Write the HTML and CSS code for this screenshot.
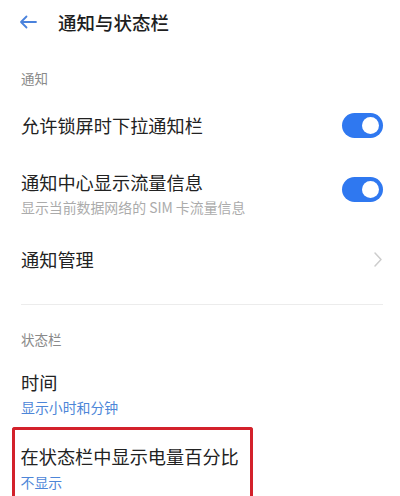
FILE: index.html
```html
<!DOCTYPE html>
<html lang="zh">
<head>
<meta charset="utf-8">
<link rel="stylesheet" href="styles.css">
</head>
<body>
<div class="page">
  <header class="topbar">
    <svg class="back" width="18" height="14" viewBox="0 0 18 14"><path d="M17 7H2M7.5 1.5L2 7l5.5 5.5" fill="none" stroke="#4a82dc" stroke-width="1.8" stroke-linecap="round" stroke-linejoin="round"/></svg>
    <h1 class="title">通知与状态栏</h1>
  </header>

  <div class="section-label first">通知</div>

  <div class="row row-toggle1">
    <div class="texts"><div class="main">允许锁屏时下拉通知栏</div></div>
    <div class="toggle"><span class="knob"></span></div>
  </div>

  <div class="row row-toggle2">
    <div class="texts">
      <div class="main">通知中心显示流量信息</div>
      <div class="sub gray">显示当前数据网络的 SIM 卡流量信息</div>
    </div>
    <div class="toggle"><span class="knob"></span></div>
  </div>

  <div class="row row-nav">
    <div class="texts"><div class="main">通知管理</div></div>
    <svg class="chev" width="10" height="17" viewBox="0 0 10 17"><path d="M2 2l6 6.5L2 15" fill="none" stroke="#cdcdcd" stroke-width="1.5" stroke-linecap="round" stroke-linejoin="round"/></svg>
  </div>

  <div class="divider"></div>

  <div class="section-label second">状态栏</div>

  <div class="row row-time">
    <div class="texts">
      <div class="main">时间</div>
      <div class="sub blue">显示小时和分钟</div>
    </div>
  </div>

  <div class="highlight">
    <div class="main">在状态栏中显示电量百分比</div>
    <div class="sub blue">不显示</div>
  </div>
</div>
</body>
</html>
```

FILE: styles.css
```css
* { box-sizing: border-box; }
html, body { margin: 0; padding: 0; background: #fff; }
body {
  font-family: "Noto Sans CJK SC", "Noto Sans", sans-serif;
  color: #222;
  width: 400px;
  height: 496px;
  overflow: hidden;
}
.page { padding: 0 17px 0 21px; }
.topbar {
  display: flex;
  align-items: center;
  height: 42px;
  padding-top: 1px;
}
.back { margin-left: -2px; width: 18px; height: 14px; }
.title {
  margin: 0 0 0 21px;
  font-size: 18.5px;
  font-weight: 500;
  color: #1e1e1e;
}
.section-label {
  font-size: 13.5px;
  color: #8a8a8a;
  line-height: 18px;
}
.section-label.first { margin-top: 27px; }
.section-label.second { margin-top: 25px; }
.row {
  display: flex;
  align-items: center;
  justify-content: space-between;
}
.main {
  font-size: 18.2px;
  line-height: 22px;
  color: #222;
}
.sub {
  font-size: 13.9px;
  line-height: 18px;
  margin-top: 5px;
}
.sub.gray { color: #ababab; }
.sub.blue { color: #4d86d8; }
.row-toggle1 { margin-top: 26px; height: 24px; }
.row-toggle2 { margin-top: 34px; align-items: flex-start; }
.row-toggle2 .toggle { margin-top: 6px; }
.toggle {
  width: 41px;
  height: 25px;
  border-radius: 13px;
  background: #2f78f0;
  position: relative;
  flex: none;
}
.knob {
  position: absolute;
  right: 4px;
  top: 4px;
  width: 17px;
  height: 17px;
  border-radius: 50%;
  background: #fff;
}
.row-nav { margin-top: 32px; height: 22px; }
.divider {
  margin-top: 34px;
  height: 1px;
  background: #ececec;
}
.row-time { margin-top: 23px; }
.highlight {
  margin-left: -9px;
  width: 241px;
  margin-top: 11px;
  border: 3.5px solid #d3212b;
  border-bottom: none;
  border-radius: 3px 3px 0 0;
  padding: 14.5px 0 20px 5.5px;
}
.highlight .sub { margin-top: 6px; }
```
